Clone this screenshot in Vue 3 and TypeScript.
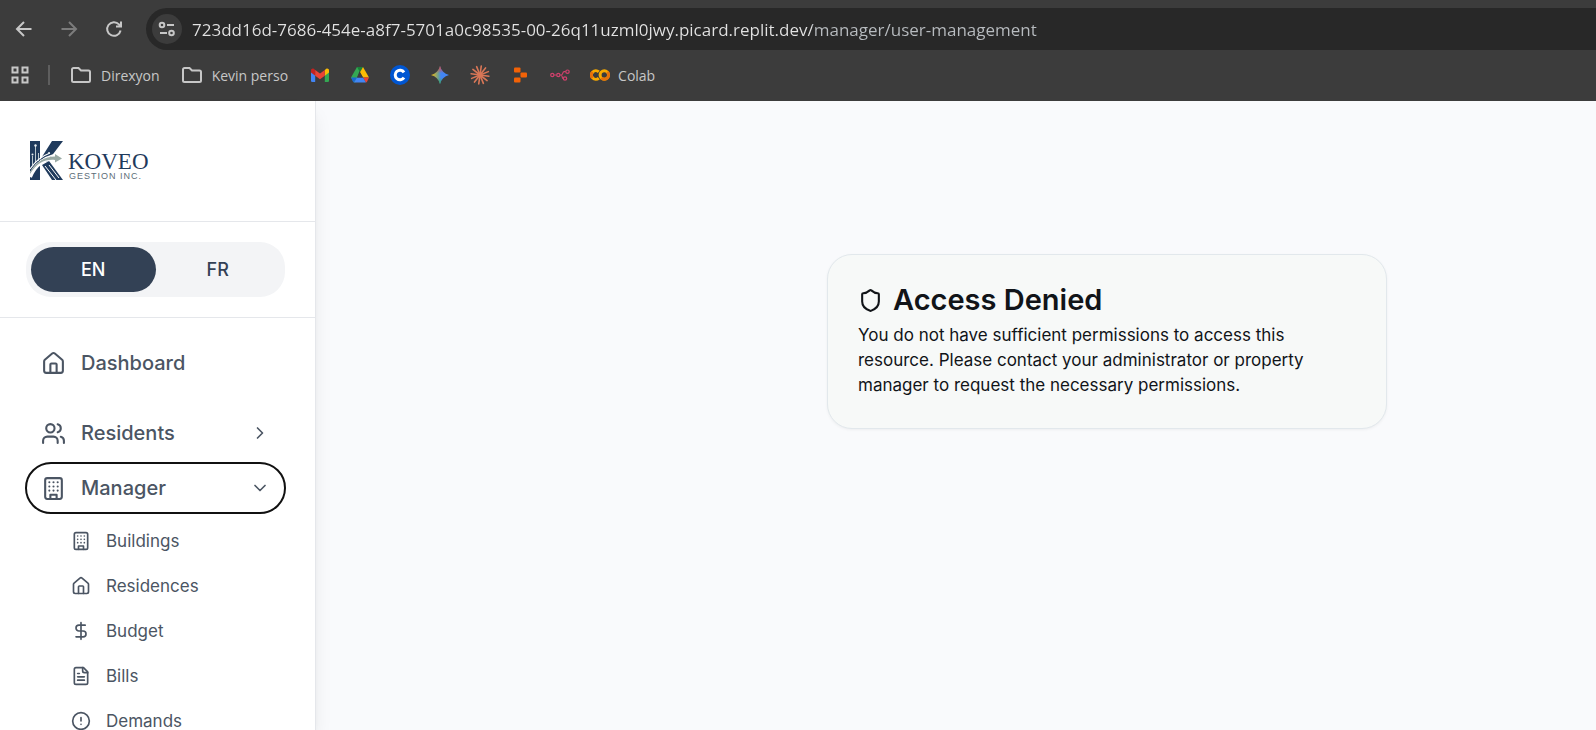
<script setup lang="ts">
import { ref } from 'vue'

type IconName = 'building' | 'home' | 'dollar' | 'file' | 'alert' | 'users'

interface NavItem {
  label: string
  icon: IconName
}

const icons: Record<IconName, string[]> = {
  building: [
    'M6 2h12a2 2 0 0 1 2 2v16a2 2 0 0 1-2 2H6a2 2 0 0 1-2-2V4a2 2 0 0 1 2-2z',
    'M9 22v-4h6v4',
    'M8 6h.01', 'M16 6h.01', 'M12 6h.01', 'M12 10h.01', 'M12 14h.01',
    'M16 10h.01', 'M16 14h.01', 'M8 10h.01', 'M8 14h.01',
  ],
  home: [
    'M15 21v-8a1 1 0 0 0-1-1h-4a1 1 0 0 0-1 1v8',
    'M3 10a2 2 0 0 1 .709-1.528l7-5.999a2 2 0 0 1 2.582 0l7 5.999A2 2 0 0 1 21 10v9a2 2 0 0 1-2 2H5a2 2 0 0 1-2-2z',
  ],
  dollar: ['M12 2v20', 'M17 5H9.5a3.5 3.5 0 0 0 0 7h5a3.5 3.5 0 0 1 0 7H6'],
  file: [
    'M15 2H6a2 2 0 0 0-2 2v16a2 2 0 0 0 2 2h12a2 2 0 0 0 2-2V7Z',
    'M14 2v4a2 2 0 0 0 2 2h4', 'M10 9H8', 'M16 13H8', 'M16 17H8',
  ],
  alert: ['M22 12a10 10 0 1 1-20 0a10 10 0 1 1 20 0z', 'M12 8v4', 'M12 16h.01'],
  users: [
    'M16 21v-2a4 4 0 0 0-4-4H6a4 4 0 0 0-4 4v2',
    'M13 7a4 4 0 1 1-8 0a4 4 0 1 1 8 0z',
    'M22 21v-2a4 4 0 0 0-3-3.87', 'M16 3.13a4 4 0 0 1 0 7.75',
  ],
}

const managerItems: NavItem[] = [
  { label: 'Buildings', icon: 'building' },
  { label: 'Residences', icon: 'home' },
  { label: 'Budget', icon: 'dollar' },
  { label: 'Bills', icon: 'file' },
  { label: 'Demands', icon: 'alert' },
]

const folders = ['Direxyon', 'Kevin perso']
const languages = ['EN', 'FR']
const rays = Array.from({ length: 12 }, (_, i) => i * 30 + 8)

const url = ref('723dd16d-7686-454e-a8f7-5701a0c98535-00-26q11uzml0jwy.picard.replit.dev/manager/user-management')
const language = ref('EN')
const managerOpen = ref(true)
</script>

<template>
  <div class="window">
    <header class="chrome">
      <div class="toolbar">
        <div class="nav-buttons">
          <button type="button" aria-label="Back">
            <svg width="20" height="20" viewBox="0 0 20 20"><path d="M17.5 10H3M10 3L3 10l7 7" /></svg>
          </button>
          <button type="button" class="dim" aria-label="Forward">
            <svg width="20" height="20" viewBox="0 0 20 20"><path d="M2.5 10H17M10 3l7 7-7 7" /></svg>
          </button>
          <button type="button" aria-label="Reload">
            <svg width="20" height="20" viewBox="0 0 20 20"><path d="M16.6 11.5A6.8 6.8 0 1 1 15 5.4L16.5 7M17 2.5V7.5H12" /></svg>
          </button>
        </div>
        <div class="omnibox">
          <button type="button" class="site-info" aria-label="View site information">
            <svg width="18" height="18" viewBox="0 0 18 18"><circle cx="4" cy="5" r="2.3" /><path d="M9 5h7M2 13h7" /><circle cx="13.5" cy="13" r="2.3" /></svg>
          </button>
          <input v-model="url" class="address" type="text" aria-label="Address" spellcheck="false" />
        </div>
      </div>

      <nav class="bookmarks" aria-label="Bookmarks">
        <button type="button" class="apps" aria-label="Apps">
          <svg width="20" height="20" viewBox="0 0 20 20"><path d="M2.5 2.5h5v5h-5zM12.5 2.5h5v5h-5zM2.5 12.5h5v5h-5zM12.5 12.5h5v5h-5z" /></svg>
        </button>
        <span class="separator"></span>
        <button v-for="folder in folders" :key="folder" type="button" class="bookmark folder">
          <svg class="line" width="20" height="20" viewBox="0 0 20 20"><path d="M1 15.5V4.5a1.5 1.5 0 0 1 1.5-1.5H7.5l2.5 2.5h7.5a1.5 1.5 0 0 1 1.5 1.5v8.5a1.5 1.5 0 0 1-1.5 1.5h-15A1.5 1.5 0 0 1 1 15.5z" /></svg>
          {{ folder }}
        </button>
        <a href="#" class="bookmark" aria-label="Gmail">
          <svg width="20" height="20" viewBox="0 0 20 20">
            <path fill="#4285f4" d="M1 6l4.200 3v8H2.300A1.300 1.300 0 0 1 1 15.700z" />
            <path fill="#34a853" d="M19 6l-4.200 3v8h2.900a1.300 1.300 0 0 0 1.300-1.300z" />
            <path fill="#fbbc04" d="M14.800 5l1.200-1c1.300-.9 3-.1 3 1.400V7.500l-4.200 3.200z" />
            <path fill="#c5221f" d="M1 7.500V5.400C1 3.900 2.700 3.100 4 4l1.200 1v5.700z" />
            <path fill="#ea4335" d="M5.200 5L10 8.600 14.800 5v5.700L10 14.300 5.200 10.700z" />
          </svg>
        </a>
        <a href="#" class="bookmark" aria-label="Google Drive">
          <svg width="20" height="20" viewBox="0 0 20 20">
            <path fill="#34a853" d="M7 2h4L5.200 17.500 3.500 17 1 12.500z" />
            <path fill="#188038" d="M7 2h6l-3 5.200z" />
            <path fill="#fbbc04" d="M13 2l6 10.500h-6L10 7.200z" />
            <path fill="#ea4335" d="M19 12.500h-6l2.900 4.900c.5 0 .9-.3 1.100-.7z" />
            <path fill="#1967d2" d="M1 12.500h6l-2.900 4.900c-.5 0-.9-.3-1.100-.7z" />
            <path fill="#4285f4" d="M7 12.500h6l2.900 5H4.100z" />
            <path fill="#3c3c3c" d="M10 7.200l3 5.300H7z" />
          </svg>
        </a>
        <a href="#" class="bookmark" aria-label="Coursera">
          <svg width="20" height="20" viewBox="0 0 20 20"><circle cx="10" cy="10" r="10" fill="#0056d2" /><path d="M14 7.300A4.800 4.800 0 1 0 14 12.700" fill="none" stroke="#fff" stroke-width="3" /></svg>
        </a>
        <a href="#" class="bookmark" aria-label="Gemini">
          <svg width="20" height="20" viewBox="0 0 20 20">
            <defs>
              <linearGradient id="spark" x1="0" y1="0" x2="1" y2="0"><stop offset="0" stop-color="#fbbc04" /><stop offset=".4" stop-color="#6f9f8f" /><stop offset=".55" stop-color="#4285f4" /></linearGradient>
              <linearGradient id="spark-top" x1="0" y1="0" x2="0" y2="1"><stop offset="0" stop-color="#ea4335" /><stop offset=".4" stop-color="#ea4335" stop-opacity="0" /><stop offset=".65" stop-color="#34a853" stop-opacity="0" /><stop offset="1" stop-color="#34a853" /></linearGradient>
            </defs>
            <path fill="url(#spark)" d="M10 1c1.200 4.700 4.300 7.800 9 9-4.700 1.200-7.800 4.300-9 9-1.200-4.700-4.300-7.800-9-9 4.700-1.200 7.800-4.300 9-9z" />
            <path fill="url(#spark-top)" d="M10 1c1.200 4.700 4.300 7.800 9 9-4.700 1.200-7.800 4.300-9 9-1.200-4.700-4.300-7.800-9-9 4.700-1.200 7.800-4.300 9-9z" />
          </svg>
        </a>
        <a href="#" class="bookmark" aria-label="Claude">
          <svg width="20" height="20" viewBox="0 0 20 20"><path v-for="ray in rays" :key="ray" d="M10 10V1" :transform="`rotate(${ray} 10 10)`" stroke="#d97757" stroke-width="1.6" stroke-linecap="round" /></svg>
        </a>
        <a href="#" class="bookmark" aria-label="Replit">
          <svg width="20" height="20" viewBox="0 0 20 20" fill="#f26207"><rect x="4" y="2.5" width="6.5" height="5" rx="1" /><rect x="10.5" y="7.5" width="6.5" height="5" rx="1" /><rect x="4" y="12.5" width="6.5" height="5" rx="1" /></svg>
        </a>
        <a href="#" class="bookmark" aria-label="n8n">
          <svg width="20" height="20" viewBox="0 0 20 20" fill="none" stroke="#d0416c" stroke-width="1.2"><circle cx="2.3" cy="10" r="1.6" /><circle cx="8.3" cy="10" r="1.6" /><circle cx="17.5" cy="6.7" r="1.7" /><circle cx="15" cy="13.5" r="1.7" /><path d="M4 10h2.500M10 10h1.200c2 0 1-3.300 3-3.300h1.500M11 10c1.600 0 .8 3.500 2.300 3.500" /></svg>
        </a>
        <a href="#" class="bookmark">
          <svg width="20" height="20" viewBox="0 0 20 20" fill="none" stroke-width="3"><path d="M8.800 6.900A4.300 4.300 0 1 0 8.800 13.100" stroke="#f9ab00" /><circle cx="14.3" cy="10" r="4.2" stroke="#f9ab00" /><path d="M17.300 7A4.200 4.200 0 0 1 11.300 13" stroke="#e8710a" /><path d="M2.600 7A4.200 4.200 0 0 0 2.600 13" stroke="#e8710a" /></svg>
          Colab
        </a>
      </nav>
    </header>

    <div class="page">
      <aside class="sidebar">
        <div class="brand">
          <svg width="130" height="50" viewBox="0 0 130 50" role="img" aria-label="Koveo Gestion Inc.">
            <g fill="#1f3a5c">
              <path d="M3 4h10v39H3zM13 23L25 4h11L20 25z" />
              <path d="M15 28l7-4 14 19H25z" />
            </g>
            <g fill="none" stroke="#fff">
              <path d="M5.500 28V19M8.500 26V9M11.500 24V16" stroke="#b9c7ce" stroke-width="1" />
              <path d="M3 32C9 23 15 19 23 16M4 35C11 24 18 20 26 18" stroke-width="1.3" />
              <path d="M3 40C9 25 20 21 30 21" stroke-width="4" />
              <path d="M18 29l11 14M22 28l10 13" stroke-width="1" />
            </g>
            <path d="M3 35C10 24 18 19.500 28 19.500V17l7 4.500-7 4v-2.500C18 22 10 26 3 37z" fill="#9aaaa5" />
            <g fill="#e9eff2"><circle cx="8.5" cy="8.5" r="1.2" /><circle cx="5.5" cy="17.5" r="1" /><circle cx="22" cy="16" r="1" /></g>
            <text x="41" y="32" class="brand-name">KOVEO</text>
            <text x="42" y="42" class="brand-sub">GESTION INC.</text>
          </svg>
        </div>

        <div class="language-area">
          <div class="language" role="group" aria-label="Language">
            <button v-for="code in languages" :key="code" type="button" :class="{ active: language === code }" :aria-pressed="language === code" @click="language = code">{{ code }}</button>
          </div>
        </div>

        <nav class="menu" aria-label="Main">
          <a href="#" class="entry dashboard">
            <svg class="icon" width="25" height="25" viewBox="0 0 24 24"><path v-for="d in icons.home" :key="d" :d="d" /></svg>
            <span>Dashboard</span>
          </a>
          <button type="button" class="entry" aria-expanded="false">
            <svg class="icon" width="25" height="25" viewBox="0 0 24 24"><path v-for="d in icons.users" :key="d" :d="d" /></svg>
            <span>Residents</span>
            <svg class="icon" width="20" height="20" viewBox="0 0 24 24"><path d="m9 18 6-6-6-6" /></svg>
          </button>
          <button type="button" class="entry current" :aria-expanded="managerOpen" @click="managerOpen = !managerOpen">
            <svg class="icon" width="25" height="25" viewBox="0 0 24 24"><path v-for="d in icons.building" :key="d" :d="d" /></svg>
            <span>Manager</span>
            <svg class="icon" width="20" height="20" viewBox="0 0 24 24"><path d="m6 9 6 6 6-6" /></svg>
          </button>
          <div v-if="managerOpen" class="submenu">
            <a v-for="item in managerItems" :key="item.label" href="#">
              <svg class="icon" width="20" height="20" viewBox="0 0 24 24"><path v-for="d in icons[item.icon]" :key="d" :d="d" /></svg>
              {{ item.label }}
            </a>
          </div>
        </nav>
      </aside>

      <main class="content">
        <section class="card">
          <h1>
            <svg class="icon" width="25" height="25" viewBox="0 0 24 24"><path d="M20 13c0 5-3.500 7.500-7.660 8.950a1 1 0 0 1-.67-.01C7.500 20.500 4 18 4 13V6a1 1 0 0 1 1-1c2 0 4.500-1.200 6.240-2.720a1.170 1.170 0 0 1 1.520 0C14.510 3.810 17 5 19 5a1 1 0 0 1 1 1z" /></svg>
            Access Denied
          </h1>
          <p>You do not have sufficient permissions to access this resource. Please contact your administrator or property manager to request the necessary permissions.</p>
        </section>
      </main>
    </div>
  </div>
</template>

<style>
html,
body {
  margin: 0;
  overflow: hidden;
}
</style>

<style scoped>
* {
  box-sizing: border-box;
}

button,
input {
  margin: 0;
  padding: 0;
  border: 0;
  background: none;
  color: inherit;
  font: inherit;
}

a {
  color: inherit;
  text-decoration: none;
}

svg {
  display: block;
  flex: none;
}

.window {
  display: flex;
  flex-direction: column;
  height: 100vh;
  font-family: Inter, sans-serif;
}

.chrome {
  flex: none;
  background: #3c3c3c;
  color: #c7c7c7;
  font-family: "Open Sans", "Noto Sans", sans-serif;
}

.toolbar {
  display: flex;
  gap: 22px;
  padding-top: 8px;
}

.nav-buttons {
  display: flex;
  align-items: center;
  gap: 25px;
  padding-left: 14px;
}

.nav-buttons svg,
.site-info svg,
.apps svg,
.line {
  fill: none;
  stroke: currentColor;
  stroke-width: 2;
}

.dim {
  color: #7c7c7c;
}

.omnibox {
  display: flex;
  flex: 1;
  align-items: center;
  gap: 10px;
  height: 42px;
  padding-left: 6px;
  border-radius: 21px 0 0 21px;
  background: #282828;
}

.site-info {
  display: grid;
  place-items: center;
  width: 30px;
  height: 30px;
  border-radius: 50%;
  background: #3c3c3c;
}

.address {
  flex: 1;
  min-width: 0;
  height: 30px;
  background: linear-gradient(90deg, #e3e3e3 620px, #b8bcc0 620px);
  background-clip: text;
  color: #e3e3e3;
  font-size: 17px;
  -webkit-text-fill-color: transparent;
}

.bookmarks {
  display: flex;
  align-items: center;
  gap: 20px;
  height: 51px;
  padding: 0 0 1px 10px;
  font-size: 14px;
}

.separator {
  width: 2px;
  height: 20px;
  margin: 0 1px 0 -2px;
  background: #5e5e5e;
}

.bookmark {
  display: flex;
  align-items: center;
  gap: 8px;
  white-space: nowrap;
}

.folder {
  gap: 10px;
  margin-right: 2px;
}

.page {
  display: flex;
  flex: 1;
  min-height: 0;
  background: #f9fafc;
}

.sidebar {
  flex: none;
  width: 316px;
  border-right: 1px solid #e5e7eb;
  background: #fff;
  box-shadow: 0 12px 19px -4px rgba(0, 0, 0, 0.1), 0 5px 8px -5px rgba(0, 0, 0, 0.1);
}

.brand {
  padding: 36px 27px 34px;
  border-bottom: 1px solid #e5e7eb;
}

.brand-name {
  fill: #1f3a5c;
  font-family: "Liberation Serif", serif;
  font-size: 23px;
}

.brand-sub {
  fill: #5d6d78;
  font-family: "Liberation Sans", sans-serif;
  font-size: 9px;
  letter-spacing: 1px;
}

.language-area {
  padding: 20px 30px 20px 26px;
  border-bottom: 1px solid #e5e7eb;
}

.language {
  display: flex;
  padding: 5px;
  border-radius: 25px;
  background: #f3f4f6;
}

.language button {
  flex: 1;
  height: 45px;
  border-radius: 23px;
  color: #334155;
  font-size: 18px;
  font-weight: 500;
}

.language .active {
  background: #334155;
  color: #fff;
}

.menu {
  display: flex;
  flex-direction: column;
  gap: 5px;
  padding: 20px 30px 0 26px;
}

.icon {
  fill: none;
  stroke: currentColor;
  stroke-width: 2;
  stroke-linecap: round;
  stroke-linejoin: round;
}

.entry {
  display: flex;
  align-items: center;
  gap: 15px;
  height: 50px;
  padding: 0 15px;
  border-radius: 25px;
  color: #4b5563;
  font-size: 20px;
  font-weight: 500;
  text-align: left;
}

.entry span {
  flex: 1;
}

.dashboard {
  margin-bottom: 15px;
}

.current {
  outline: 2px solid #111;
  outline-offset: -1px;
}

.submenu {
  padding-left: 45px;
}

.submenu a {
  display: flex;
  align-items: center;
  gap: 15px;
  height: 45px;
  color: #4b5563;
  font-size: 17px;
}

.content {
  display: grid;
  flex: 1;
  grid-template-columns: 511fr minmax(0, 560px) 209fr;
  align-items: start;
  padding-top: 153px;
}

.card {
  grid-column: 2;
  padding: 30px;
  border: 1px solid #e2e8ec;
  border-radius: 25px;
  background: #f7f9f8;
  box-shadow: 0 1px 3px rgba(0, 0, 0, 0.05);
  color: #111418;
}

h1 {
  display: flex;
  align-items: center;
  gap: 10px;
  margin: 0 0 8px;
  font-size: 29px;
  font-weight: 600;
  line-height: 30px;
}

p {
  margin: 0;
  font-size: 17px;
  line-height: 25px;
}
</style>
